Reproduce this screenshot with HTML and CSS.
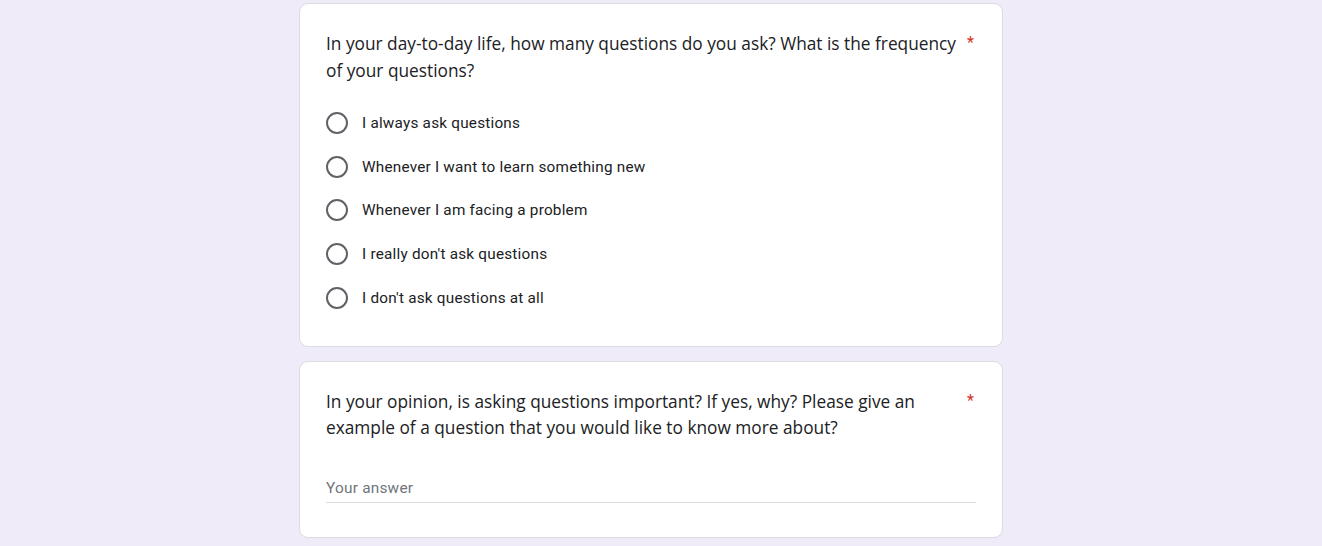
FILE: index.html
```html
<!DOCTYPE html>
<html lang="en">
<head>
<meta charset="utf-8">
<title>Form</title>
<link rel="stylesheet" href="styles.css">
</head>
<body>
<main class="form">
  <section class="card">
    <div class="q-head">
      <div class="q-title">In your day-to-day life, how many questions do you ask? What is the frequency of your questions?</div>
      <span class="req">*</span>
    </div>
    <div class="options">
      <label class="opt"><span class="radio"></span><span class="opt-text">I always ask questions</span></label>
      <label class="opt"><span class="radio"></span><span class="opt-text">Whenever I want to learn something new</span></label>
      <label class="opt"><span class="radio"></span><span class="opt-text">Whenever I am facing a problem</span></label>
      <label class="opt"><span class="radio"></span><span class="opt-text">I really don't ask questions</span></label>
      <label class="opt"><span class="radio"></span><span class="opt-text">I don't ask questions at all</span></label>
    </div>
  </section>
  <section class="card card-text">
    <div class="q-head">
      <div class="q-title">In your opinion, is asking questions important? If yes, why? Please give an example of a question that you would like to know more about?</div>
      <span class="req">*</span>
    </div>
    <div class="answer"><span class="placeholder">Your answer</span></div>
  </section>
</main>
</body>
</html>
```
FILE: styles.css
```css
html, body {
  margin: 0;
  padding: 0;
  background: #f0ebf8;
}
body {
  font-family: "Open Sans", "Noto Sans", sans-serif;
  color: #202124;
}
.form {
  width: 704px;
  margin-left: 299px;
  padding-top: 3px;
  display: flex;
  flex-direction: column;
  gap: 14px;
}
.card {
  background: #fff;
  border: 1px solid #dadce0;
  border-radius: 9px;
  padding: 27px 26px 26px 26px;
}
.q-head {
  display: flex;
  align-items: flex-start;
}
.q-title {
  flex: 1;
  font-family: "Open Sans", sans-serif;
  font-size: 17.3px;
  line-height: 26.5px;
  letter-spacing: 0;
  color: #202124;
  padding-right: 8px;
}
.req {
  color: #d93025;
  font-family: "Roboto", sans-serif;
  font-size: 16px;
  line-height: 24px;
  width: 7px;
  margin-right: 2px;
}
.options {
  margin-top: 17px;
  display: flex;
  flex-direction: column;
}
.opt {
  display: flex;
  align-items: center;
  height: 43.8px;
}
.radio {
  box-sizing: border-box;
  width: 22px;
  height: 22px;
  border: 2.2px solid #5f6368;
  border-radius: 50%;
  margin-right: 14px;
}
.opt-text {
  font-family: "Roboto", sans-serif;
  font-size: 15.3px;
  letter-spacing: 0.22px;
  color: #202124;
}
.card-text {
  padding-bottom: 34px;
}
.answer {
  margin-top: 33px;
  border-bottom: 1px solid #dadce0;
  height: 27px;
  display: flex;
  align-items: center;
}
.placeholder {
  font-family: "Roboto", sans-serif;
  font-size: 15.4px;
  letter-spacing: 0.22px;
  color: #70757a;
}
```
